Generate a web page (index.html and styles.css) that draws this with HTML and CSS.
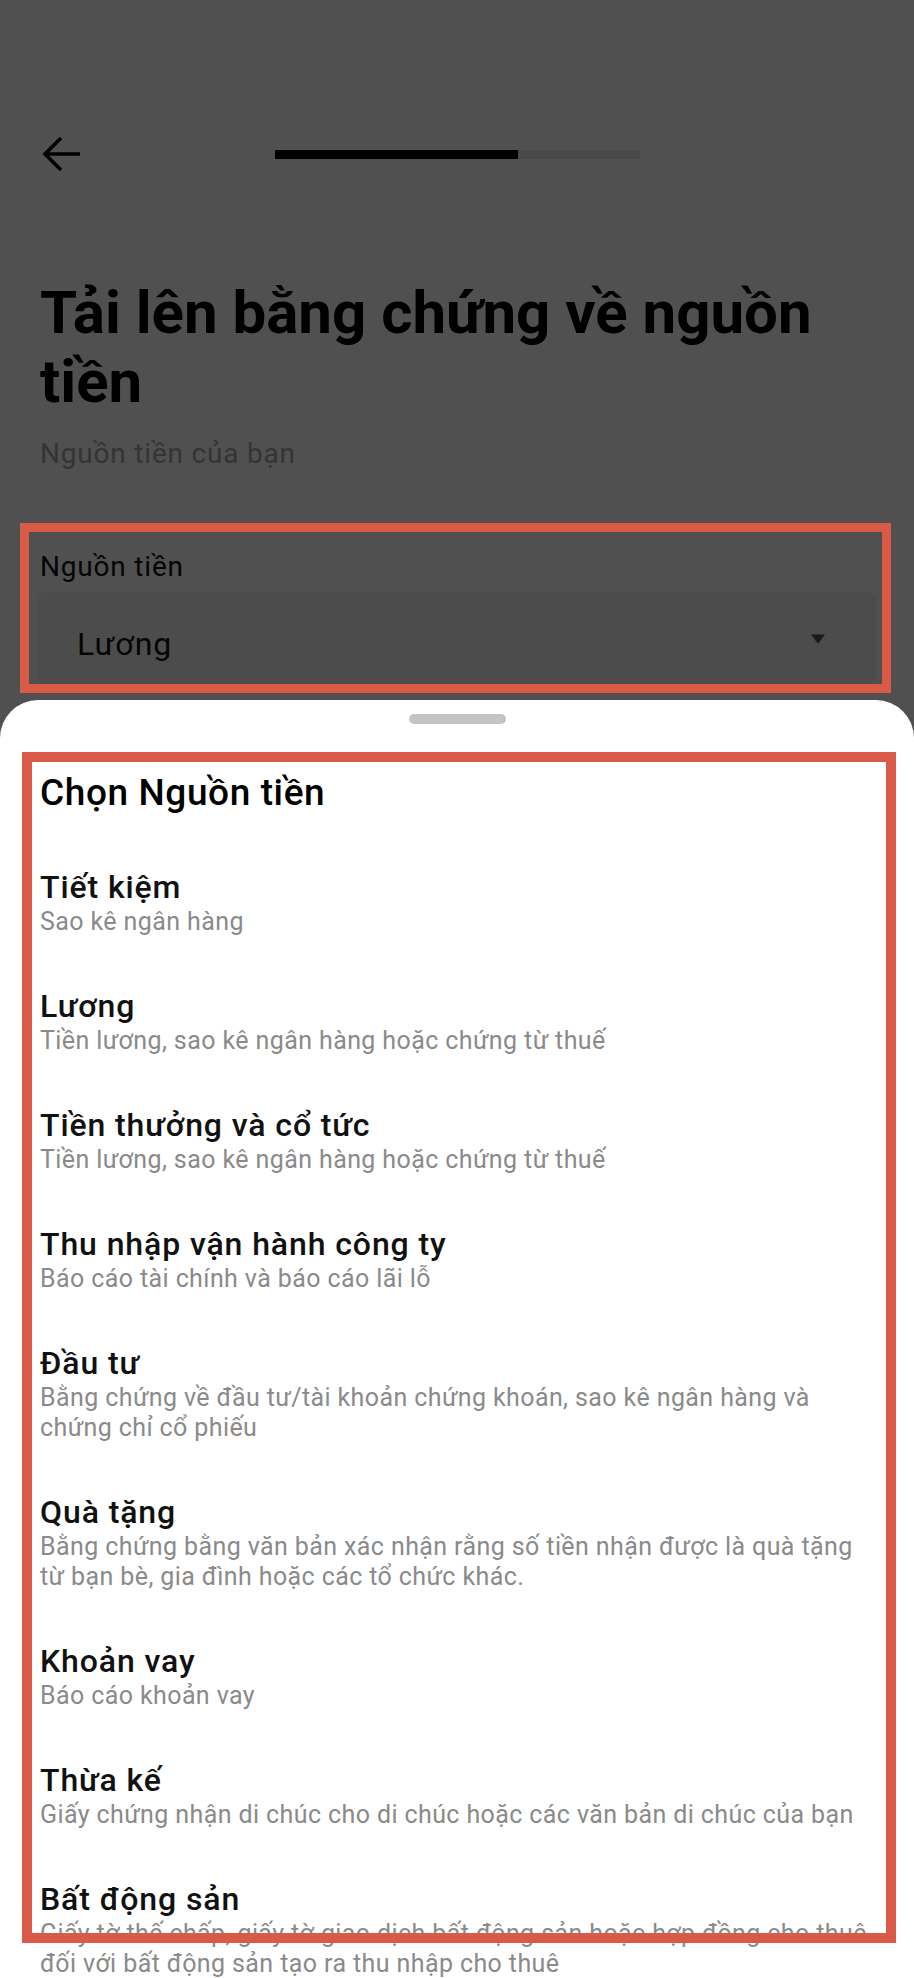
FILE: index.html
```html
<!DOCTYPE html>
<html lang="vi">
<head>
    <meta charset="UTF-8">
    <meta name="viewport" content="width=device-width, initial-scale=1">
    <title>Tải lên bằng chứng về nguồn tiền</title>
    <link rel="stylesheet" href="styles.css">
</head>
<body>
<div class="screen">
    <div class="page">
        <div class="top-bar">
            <svg class="back" viewBox="0 0 40 40" fill="none" stroke="#000" stroke-width="3.6">
                <path d="M4 20H39"/>
                <path d="M20 4L4 20L20 36"/>
            </svg>
            <div class="progress">
                <div class="progress-fill" style="width: 66.6%"></div>
            </div>
            <div></div>
        </div>

        <h1 class="title">Tải lên bằng chứng về nguồn tiền</h1>
        <p class="subtitle">Nguồn tiền của bạn</p>

        <div class="field-label">Nguồn tiền</div>
        <div class="select">
            <span class="select-value">Lương</span>
            <svg class="caret" viewBox="0 0 16 11">
                <path d="M1 1.5H15L8.8 9.8Q8 10.8 7.2 9.8Z" fill="#555"/>
            </svg>
        </div>
    </div>

    <div class="scrim"></div>

    <div class="sheet">
        <div class="handle"></div>
        <h2 class="sheet-title">Chọn Nguồn tiền</h2>
        <ul class="options">
            <li>
                <div class="option-name">Tiết kiệm</div>
                <div class="option-desc">Sao kê ngân hàng</div>
            </li>
            <li>
                <div class="option-name">Lương</div>
                <div class="option-desc">Tiền lương, sao kê ngân hàng hoặc chứng từ thuế</div>
            </li>
            <li>
                <div class="option-name">Tiền thưởng và cổ tức</div>
                <div class="option-desc">Tiền lương, sao kê ngân hàng hoặc chứng từ thuế</div>
            </li>
            <li>
                <div class="option-name">Thu nhập vận hành công ty</div>
                <div class="option-desc">Báo cáo tài chính và báo cáo lãi lỗ</div>
            </li>
            <li>
                <div class="option-name">Đầu tư</div>
                <div class="option-desc">Bằng chứng về đầu tư/tài khoản chứng khoán, sao kê ngân hàng và chứng chỉ cổ phiếu</div>
            </li>
            <li>
                <div class="option-name">Quà tặng</div>
                <div class="option-desc">Bằng chứng bằng văn bản xác nhận rằng số tiền nhận được là quà tặng từ bạn bè, gia đình hoặc các tổ chức khác.</div>
            </li>
            <li>
                <div class="option-name">Khoản vay</div>
                <div class="option-desc">Báo cáo khoản vay</div>
            </li>
            <li>
                <div class="option-name">Thừa kế</div>
                <div class="option-desc">Giấy chứng nhận di chúc cho di chúc hoặc các văn bản di chúc của bạn</div>
            </li>
            <li>
                <div class="option-name">Bất động sản</div>
                <div class="option-desc">Giấy tờ thế chấp, giấy tờ giao dịch bất động sản hoặc hợp đồng cho thuê đối với bất động sản tạo ra thu nhập cho thuê</div>
            </li>
        </ul>
    </div>

    <div class="mark mark-field"></div>
    <div class="mark mark-list"></div>
</div>
</body>
</html>
```

FILE: styles.css
```css
html, body {
    margin: 0;
    padding: 0;
    background: #fff;
}

body {
    font-family: Roboto, "Noto Sans", sans-serif;
    color: #000;
}

.screen {
    position: relative;
    width: 914px;
    height: 1978px;
    overflow: hidden;
    background: #fff;
}

.page {
    padding: 122px 40px 0;
}

.top-bar {
    display: grid;
    grid-template-columns: 1fr auto 1fr;
    align-items: center;
    height: 64px;
}

.back {
    width: 40px;
    height: 40px;
    margin-left: 1px;
}

.progress {
    width: 365px;
    height: 9px;
    background: #e8e8e8;
}

.progress-fill {
    height: 100%;
    background: #000;
}

.title {
    margin: 92px 0 0;
    font-size: 60px;
    line-height: 69px;
    font-weight: 700;
}

.subtitle {
    margin: 21px 0 0;
    font-size: 28px;
    line-height: 34px;
    letter-spacing: .8px;
    color: #a6a6a6;
}

.field-label {
    margin-top: 79px;
    font-size: 28px;
    line-height: 34px;
    letter-spacing: .8px;
    color: #111;
}

.select {
    display: flex;
    align-items: center;
    justify-content: space-between;
    box-sizing: border-box;
    height: 92px;
    margin: 8px -2px 0;
    padding: 12px 50px 0 39px;
    background: #f1f1f1;
    border-radius: 8px;
}

.select-value {
    font-size: 32px;
    letter-spacing: 1px;
    color: #111;
}

.caret {
    width: 16px;
    height: 11px;
    margin-top: -12px;
}

.scrim {
    position: absolute;
    top: 0;
    right: 0;
    bottom: 0;
    left: 0;
    background: rgba(0, 0, 0, .686);
}

.sheet {
    position: absolute;
    top: 700px;
    right: 0;
    bottom: 0;
    left: 0;
    padding: 14px 40px 0;
    background: #fff;
    border-radius: 38px 38px 0 0;
}

.handle {
    width: 97px;
    height: 10px;
    margin: 0 auto;
    border-radius: 5px;
    background: #c4c4c4;
}

.sheet-title {
    margin: 48px 0 0;
    font-size: 37px;
    line-height: 42px;
    font-weight: 500;
    letter-spacing: .6px;
}

.options {
    display: flex;
    flex-direction: column;
    gap: 51px;
    margin: 55px 0 0;
    padding: 0;
    list-style: none;
}

.option-name {
    font-size: 32px;
    line-height: 36px;
    font-weight: 500;
    letter-spacing: .9px;
    color: #111;
}

.option-desc {
    margin-top: 2px;
    font-size: 25px;
    line-height: 30px;
    letter-spacing: .4px;
    color: #8a8a8a;
}

/* annotation frames drawn over the screenshot */
.mark {
    position: absolute;
    box-sizing: border-box;
    border: 9px solid #d85a47;
    pointer-events: none;
}

.mark-field {
    top: 523px;
    left: 20px;
    width: 871px;
    height: 170px;
}

.mark-list {
    top: 752px;
    left: 22px;
    width: 874px;
    height: 1191px;
    border-width: 10px;
}
```
